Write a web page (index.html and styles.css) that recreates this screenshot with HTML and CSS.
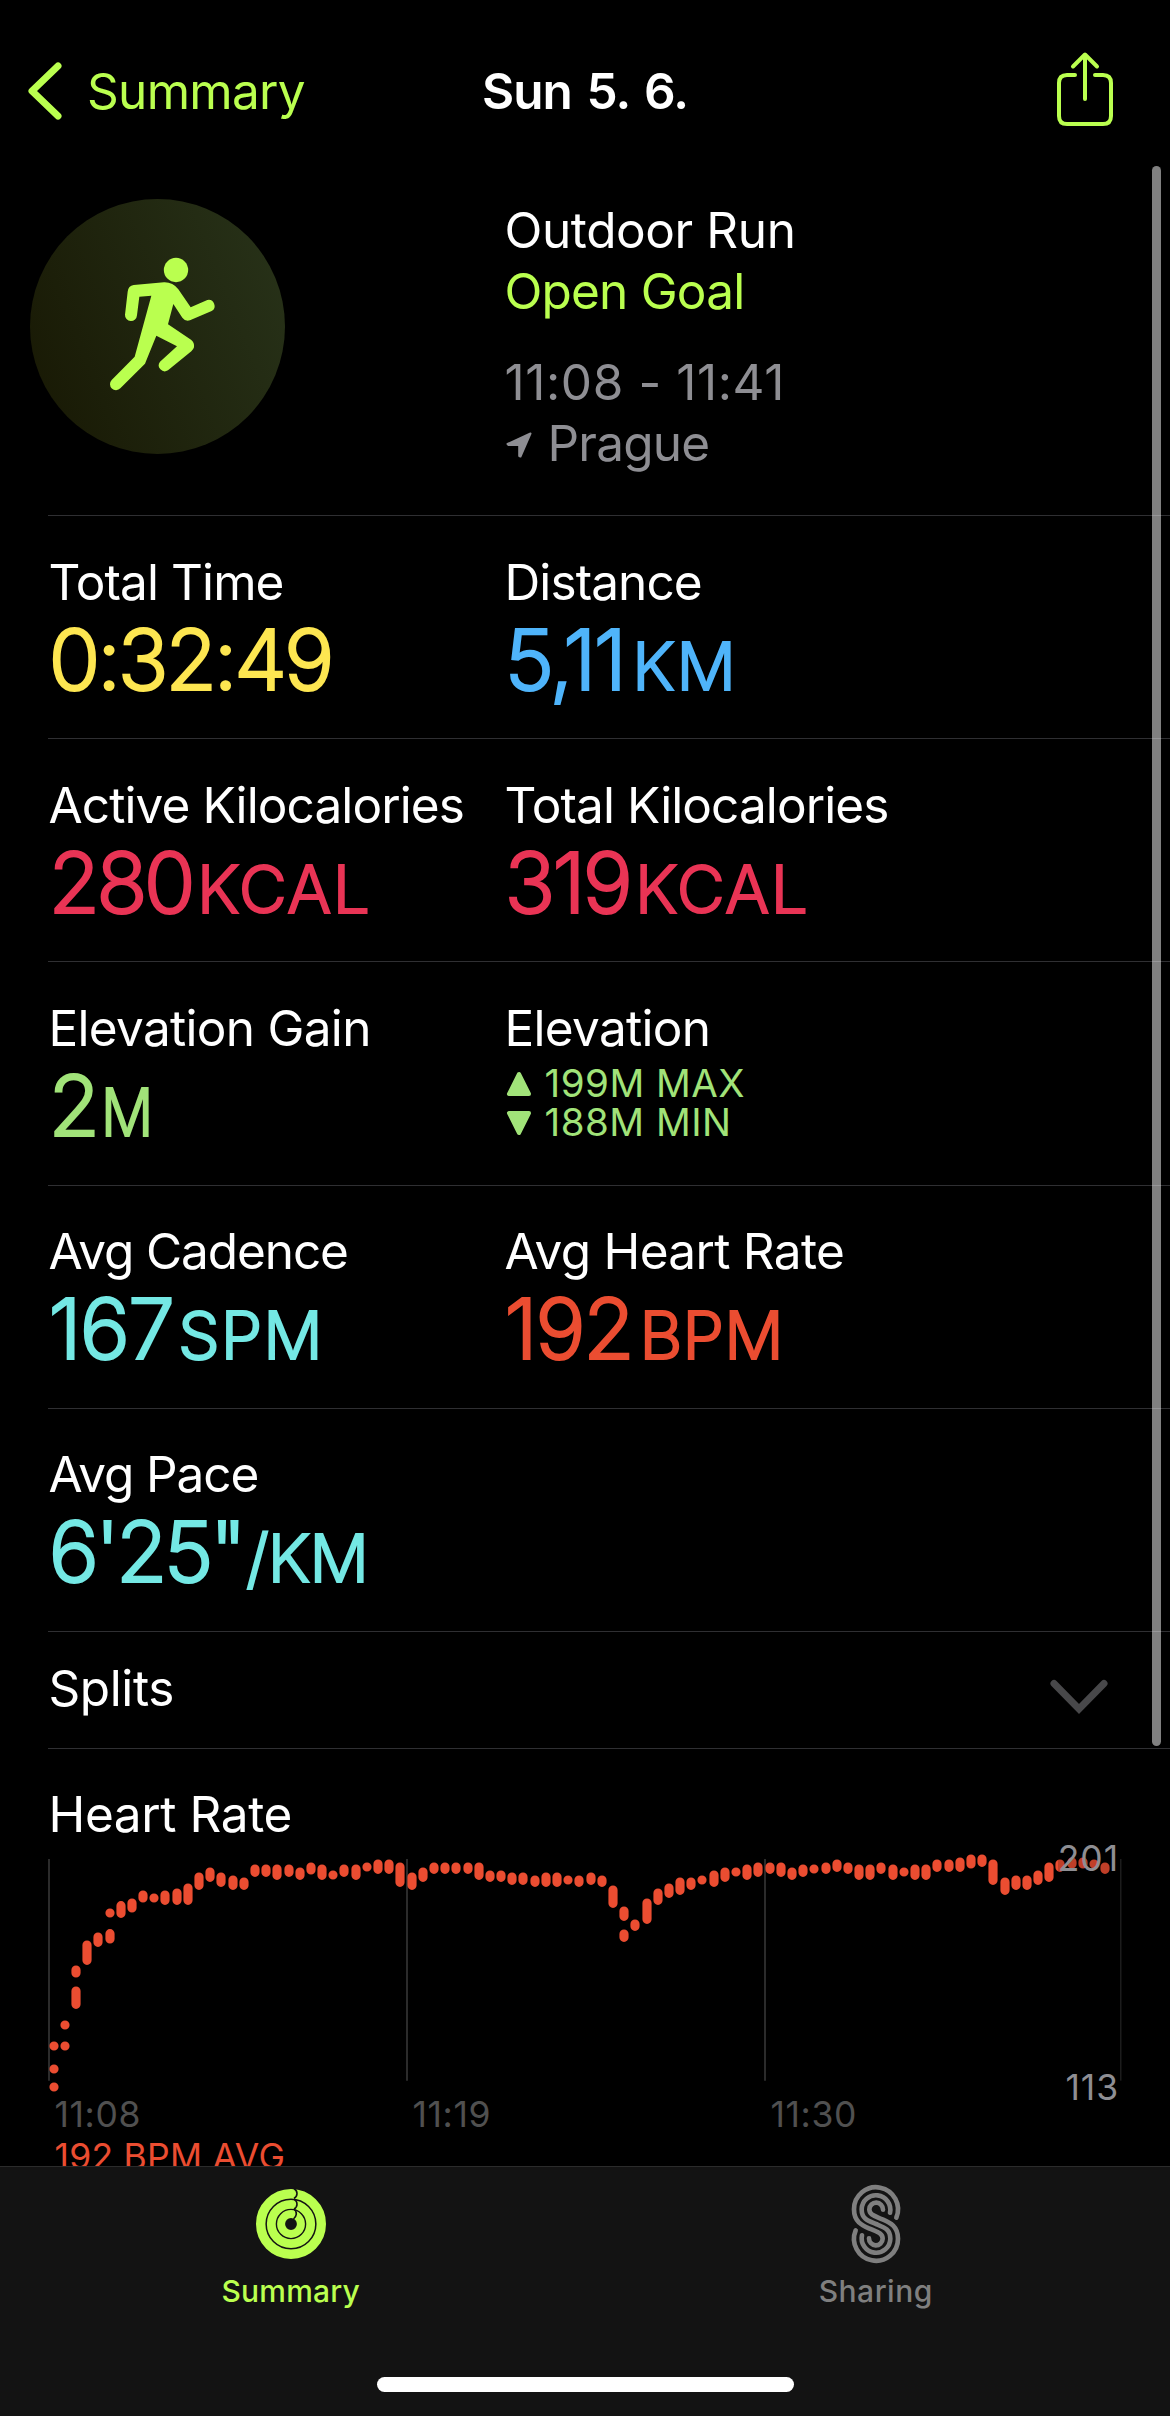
FILE: index.html
```html
<!DOCTYPE html>
<html lang="en">
<head>
<meta charset="utf-8">
<title>Outdoor Run</title>
<link rel="stylesheet" href="styles.css">
</head>
<body>
<div class="app">
  <header class="nav">
    <a class="back">
      <svg class="back-icon" viewBox="0 0 36 60" width="36" height="60"><path d="M31 5 5 30 31 55"/></svg>
      <span class="back-text">Summary</span>
    </a>
    <h1 class="title">Sun 5. 6.</h1>
    <svg class="share" viewBox="0 0 60 76" width="60" height="76"><path d="M20 24H12Q4 24 4 32V65Q4 73 12 73H48Q56 73 56 65V32Q56 24 48 24H40M30 48V4M18 15.500 30 3.500 42 15.500"/></svg>
  </header>

  <main class="content">
    <section class="workout">
      <svg class="badge" viewBox="30 27 765 765" width="255" height="255">
        <defs><linearGradient id="disc" x1="0" y1=".7" x2="1" y2=".3"><stop offset="0" stop-color="#191a05"/><stop offset="1" stop-color="#273118"/></linearGradient></defs>
        <circle cx="412.500" cy="409.500" r="382.500" fill="url(#disc)"/>
        <g fill="#baff4f"><circle cx="468" cy="240" r="36.500"/>
        <path d="M341 285 432 277Q458 276 475 298L512 352 562 330A18 18 0 0 1 575 363L510 391Q497 396 487 383L460 342 444 403 513 449Q524 457 522 472 520 479 514 484L444 541A18 18 0 0 1 420 515L471 469 409 437 378 514 375 521 301 595A18 18 0 0 1 275 570L344 500 394 317 358 320 351 376A17.500 17.500 0 0 1 315 374L323 305Q325 287 341 285Z"/></g>
      </svg>
      <div class="workout-info">
        <div class="line w-type">Outdoor Run</div>
        <div class="line w-goal">Open Goal</div>
        <div class="line w-time">11:08 - 11:41</div>
        <div class="line w-place">
          <svg viewBox="0 0 26 26" width="26" height="26"><path d="M24.500 1.500 14.500 24.500 13.200 24V13H2.500L1.500 12Z"/></svg>
          <span>Prague</span>
        </div>
      </div>
    </section>

    <section class="row">
      <div class="stat"><div class="label">Total Time</div><div class="value yellow clock">0:32:49</div></div>
      <div class="stat"><div class="label">Distance</div><div class="value blue distance">5,11<span class="unit">KM</span></div></div>
    </section>
    <section class="row">
      <div class="stat"><div class="label">Active Kilocalories</div><div class="value pink">280<span class="unit kcal">KCAL</span></div></div>
      <div class="stat"><div class="label">Total Kilocalories</div><div class="value pink total">319<span class="unit kcal">KCAL</span></div></div>
    </section>
    <section class="row">
      <div class="stat"><div class="label wide">Elevation Gain</div><div class="value green">2<span class="unit meters">M</span></div></div>
      <div class="stat"><div class="label wide">Elevation</div>
        <div class="range green">
          <div class="range-line"><svg viewBox="0 0 26 26" width="26" height="26"><path d="M13 3 3 23H23Z"/></svg><span>199M MAX</span></div>
          <div class="range-line"><svg viewBox="0 0 26 26" width="26" height="26"><path d="M13 23 3 3H23Z"/></svg><span>188M MIN</span></div>
        </div>
      </div>
    </section>
    <section class="row">
      <div class="stat"><div class="label tight">Avg Cadence</div><div class="value teal cadence">167<span class="unit">SPM</span></div></div>
      <div class="stat"><div class="label wide">Avg Heart Rate</div><div class="value red pulse">192<span class="unit">BPM</span></div></div>
    </section>
    <section class="row">
      <div class="stat"><div class="label tight">Avg Pace</div><div class="value teal pace">6'25"<span class="unit">/KM</span></div></div>
    </section>
    <section class="splits">
      <div class="label wider">Splits</div>
      <svg class="down" viewBox="0 0 60 36" width="60" height="36"><path d="M5 4.500 30 30 55 4.500"/></svg>
    </section>

    <section class="heart">
      <div class="label wider">Heart Rate</div>
      <div class="plot">
        <svg class="chart" viewBox="24 0 3366 765" width="1122" height="255">
          <path class="grid" d="M27 57V722M1101 57V722M2175 57V722"/>
          <path class="grid thin" d="M3242.500 57V722"/>
          <path class="beats" d="M42 618h0M42 687h0M42 741h0M75 555h0M75 618h0M108 390V399M108 453V493M141 315V361M174 291V307M210 219h0M210 281V297M243 197V220M276 189V204M309 165V174M342 174h0M375 165V181M411 159V181M444 144V181M477 111V136M510 96V112M543 111V127M579 120V136M612 126V136M645 87V97M678 87V97M711 87V106M747 87V97M780 96V106M813 81V90M846 87V106M879 105h0M912 87V97M948 87V106M981 81h0M1014 72V88M1047 72V88M1080 81V127"/>
          <path class="beats" transform="translate(1080 0)" d="M36 111V136M69 96V112M102 81V88M135 81V88M168 81V88M204 81V88M237 81V106M270 105V112M303 105V112M336 111V121M369 111V121M405 120V127M438 111V127M471 111V127M504 120h0M537 120V127M573 111V121M606 120V127M639 150V190M672 213V229M672 282V292M705 252V259M741 189V238M774 159V181M807 144V160M840 126V151M873 126V136M906 120h0M942 105V127M975 96V112M1008 96h0M1041 87V106M1074 81V97M1110 81V88M1143 81V97"/>
          <path class="beats" transform="translate(2220 0)" d="M36 96V106M69 87V97M102 87h0M138 81V88M171 72V82M204 81V88M237 87V106M270 87V106M303 81V88M339 87V106M372 96h0M405 87V106M438 87V106M471 72V82M507 72V82M540 66V82M573 57V72M606 57V67M639 72V121M675 126V151M708 120V136M741 120V136M774 105V121M807 81V112M840 72V82M876 66V72M909 66V72M942 72h0M975 81V88"/>
        </svg>
        <span class="bound max">201</span>
        <span class="bound min">113</span>
      </div>
      <div class="axis"><span>11:08</span><span>11:19</span><span>11:30</span></div>
      <div class="avg">192 BPM AVG</div>
    </section>
  </main>

  <div class="scrollbar"></div>

  <footer class="tabbar">
    <div class="tabs">
      <div class="tab active">
        <svg viewBox="-50 -50 100 100" width="100" height="100">
          <g fill="none" stroke="#baff4f"><circle r="30.300" stroke-width="9.400"/><circle r="19.700" stroke-width="8.800"/><circle r="9.900" stroke-width="8"/></g>
          <path class="ring-cut" d="M3-35.500Q6-33.500 6-30.500 6-27.500 3-25.500M3-25Q6-23 6-19.800 6-16.800 3-15M3-14.800Q5.500-13 5.300-9.800 5-7 2.500-5"/>
        </svg>
        <span class="tab-text">Summary</span>
      </div>
      <div class="tab">
        <svg class="strands" viewBox="-11 -8 300 300" width="100" height="100">
          <path d="M200 123A66 66 0 1 0 73 98C73 136 97 146 120 156 146 167 159 170 159 186A20 20 0 0 1 118 185"/>
          <path d="M181 108A43 43 0 1 0 96 98C96 127 115 132 139 142 163 152 182 157 182 186A43 43 0 1 1 97 176"/>
          <path transform="rotate(180 139 142)" d="M200 123A66 66 0 1 0 73 98C73 136 97 146 120 156 146 167 159 170 159 186A20 20 0 0 1 118 185"/>
        </svg>
        <span class="tab-text sharing">Sharing</span>
      </div>
    </div>
    <div class="home"></div>
  </footer>
</div>
</body>
</html>
```
FILE: styles.css
```css
* { box-sizing: border-box; margin: 0; padding: 0; }
body { background: #000; }
svg { display: block; flex: none; }
.app {
  position: relative;
  width: 1170px;
  height: 2416px;
  overflow: hidden;
  display: flex;
  flex-direction: column;
  background: #000;
  color: #fff;
  font-family: Inter, "Liberation Sans", sans-serif;
  font-size: 49.5px;
  line-height: 60px;
  white-space: nowrap;
}

.nav {
  height: 166px;
  flex: none;
  display: grid;
  grid-template-columns: 1fr auto 1fr;
  align-items: start;
  padding: 61px 27px 0;
}
.back { display: flex; color: #baff4f; }
.back-icon { fill: none; stroke: #baff4f; stroke-width: 7; stroke-linecap: round; stroke-linejoin: round; }
.back-text { margin-left: 24px; letter-spacing: -.7px; }
.title { font-size: 49.5px; font-weight: 600; letter-spacing: -.9px; word-spacing: 3px; }
.share { justify-self: end; margin: -10px 28px 0 0; fill: none; stroke: #baff4f; stroke-width: 4; stroke-linecap: round; stroke-linejoin: round; }

.content { flex: 1; min-height: 0; overflow: hidden; }

.workout {
  height: 349px;
  display: grid;
  grid-template-columns: 474.5px 1fr;
  padding: 33px 0 0 30px;
}
.line { height: 61px; line-height: 62px; letter-spacing: -.8px; }
.w-type { letter-spacing: -.4px; }
.w-goal { color: #baff4f; }
.w-time { margin-top: 30px; letter-spacing: .6px; }
.w-time, .w-place { color: #8e8e93; }
.w-place { display: flex; gap: 16px; }
.w-place svg { margin: 20px 0 0 1px; fill: #8e8e93; stroke: #8e8e93; stroke-width: 2; stroke-linejoin: round; }

.row, .splits, .heart { margin-left: 48px; border-top: 1px solid #2f2f32; }
.row { height: 223.200px; display: grid; grid-template-columns: 456px 1fr; padding: 35.5px 0 0 .5px; }
.label { letter-spacing: -.9px; }
.wide { letter-spacing: -.7px; }
.wider { letter-spacing: -.4px; }
.tight { letter-spacing: -1.1px; }
.value {
  margin-top: 3px;
  font-size: 84px;
  font-weight: 300;
  line-height: 90px;
  letter-spacing: -3.8px;
  -webkit-text-stroke: 2px currentColor;
  stroke-linejoin: round;
}
.clock { letter-spacing: -3.2px; }
.distance { letter-spacing: -2.600px; }
.distance .unit { margin-left: 8px; letter-spacing: 1.5px; }
.total { letter-spacing: -3px; }
.cadence { letter-spacing: -2px; }
.cadence .unit { margin-left: 5px; letter-spacing: 1px; }
.pulse { letter-spacing: -2.400px; }
.pulse .unit { letter-spacing: .3px; }
.unit { margin-left: 7px; font-size: 66px; line-height: 0; letter-spacing: -1px; }
.kcal { margin-left: 5px; letter-spacing: 1.300px; }
.meters { display: inline-block; margin-left: 5px; transform: scaleX(.88); transform-origin: left; }
.pace .unit { margin-left: 3px; }
.yellow { color: #fde651; }
.blue { color: #4fb4fa; }
.pink { color: #e93455; }
.green { color: #a1e379; }
.teal { color: #74e8e4; }
.red { color: #eb4d31; }
.range { font-size: 38.5px; line-height: 39px; padding: 6px 0 0 1px; }
.range-line { display: flex; align-items: center; gap: 13px; letter-spacing: .5px; }
.range-line svg { fill: #a1e379; stroke: #a1e379; stroke-width: 4; stroke-linejoin: round; margin-top: 1px; }

.splits { height: 117px; display: flex; justify-content: space-between; padding: 26px 61px 0 .5px; }
.down { margin-top: 21px; fill: none; stroke: #48484a; stroke-width: 7; stroke-linecap: round; }

.heart { padding-top: 35px; }
.heart .label { padding-left: .5px; height: 56px; }
.plot { position: relative; height: 250px; }
.grid { fill: none; stroke: #2b2b2b; stroke-width: 6; }
.thin { stroke-width: 3; }
.beats { fill: none; stroke: #eb4d31; stroke-width: 27.500; stroke-linecap: round; }
.bound { position: absolute; right: 51px; color: #8e8e93; font-size: 35.5px; line-height: 42px; letter-spacing: .9px; background: rgba(0, 0, 0, .18); }
.max { top: -2px; }
.min { top: 227px; }
.axis { display: grid; grid-template-columns: 358px 358px 1fr; padding: 4px 0 0 6.5px; font-size: 35.5px; line-height: 42px; letter-spacing: .6px; color: #505050; }
.avg { padding-left: 6.5px; font-size: 35.5px; line-height: 42px; letter-spacing: .25px; color: #eb4d31; }

.scrollbar { position: absolute; left: 1152px; top: 166px; width: 9px; height: 1580px; border-radius: 5px; background: rgba(255, 255, 255, .5); }

.tabbar { height: 250px; flex: none; display: flex; flex-direction: column; align-items: center; background: #131313; border-top: 1px solid #2b2b2b; }
.tabs { width: 100%; height: 210px; display: grid; grid-template-columns: 581.5px 1fr; }
.tab { display: flex; flex-direction: column; align-items: center; padding-top: 7px; color: #7f7f7f; }
.active { color: #baff4f; }
.tab-text { font-size: 30px; font-weight: 500; line-height: 36px; margin-top: -1px; letter-spacing: .2px; }
.sharing { letter-spacing: .5px; }
.ring-cut { fill: none; stroke: #131313; stroke-width: 1.6; }
.strands { fill: none; stroke: #7f7f7f; stroke-width: 14; stroke-linecap: round; }
.home { width: 417px; height: 15px; border-radius: 8px; background: #fff; }
```
